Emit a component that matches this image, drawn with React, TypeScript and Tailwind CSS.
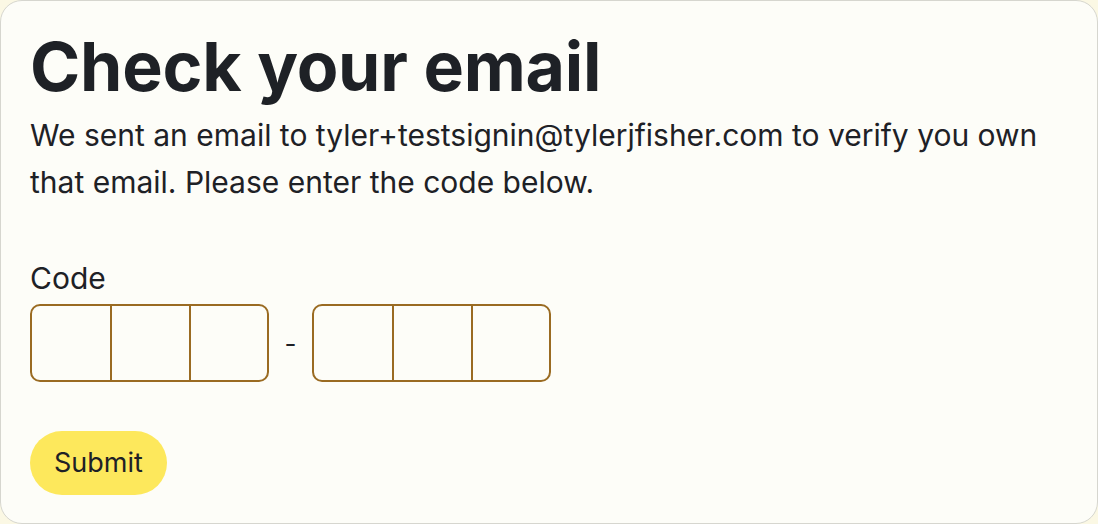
import { useState } from "react";

function CodeGroup({ values, onChange }: { values: string[]; onChange: (i: number, v: string) => void }) {
  return (
    <div className="flex h-[78px] w-[239px] overflow-hidden rounded-[10px] border-2 border-[#9a6b22]">
      {values.map((v, i) => (
        <input
          key={i}
          value={v}
          maxLength={1}
          onChange={(e) => onChange(i, e.target.value)}
          className={
            "h-full w-1/3 bg-transparent text-center text-[30px] outline-none" +
            (i > 0 ? " border-l-2 border-[#9a6b22]" : "")
          }
        />
      ))}
    </div>
  );
}

export default function App() {
  const [code, setCode] = useState(["", "", "", "", "", ""]);

  const setDigit = (i: number, v: string) => {
    const next = [...code];
    next[i] = v;
    setCode(next);
  };

  return (
    <div
      className="h-[524px] w-[1098px] bg-[#fbf8e4] text-[#1e2126]"
      style={{ fontFamily: "Inter, 'Liberation Sans', sans-serif" }}
    >
      <main className="h-full w-full rounded-[22px] border border-[#d6d6cf] bg-[#fdfdf8] px-[29px] pt-[25px]">
        <h1 className="text-[68px] font-bold leading-[80px] tracking-[-0.25px]">Check your email</h1>
        <p className="mt-[6px] text-[30px] leading-[47px]">
          We sent an email to tyler+testsignin@tylerjfisher.com to verify you own that email. Please enter the code
          below.
        </p>
        {/* Code input */}
        <form className="mt-[55px]" onSubmit={(e) => e.preventDefault()}>
          <label className="block text-[30px] leading-[34px]">Code</label>
          <div className="mt-[9px] flex items-center gap-[14px]">
            <CodeGroup values={code.slice(0, 3)} onChange={(i, v) => setDigit(i, v)} />
            <span className="w-[15px] text-center text-[26px]">-</span>
            <CodeGroup values={code.slice(3)} onChange={(i, v) => setDigit(i + 3, v)} />
          </div>
          <button
            type="submit"
            className="mt-[49px] h-[64px] rounded-full bg-[#fde85c] px-[24px] text-[27px] text-[#1e2126]"
          >
            Submit
          </button>
        </form>
      </main>
    </div>
  );
}
